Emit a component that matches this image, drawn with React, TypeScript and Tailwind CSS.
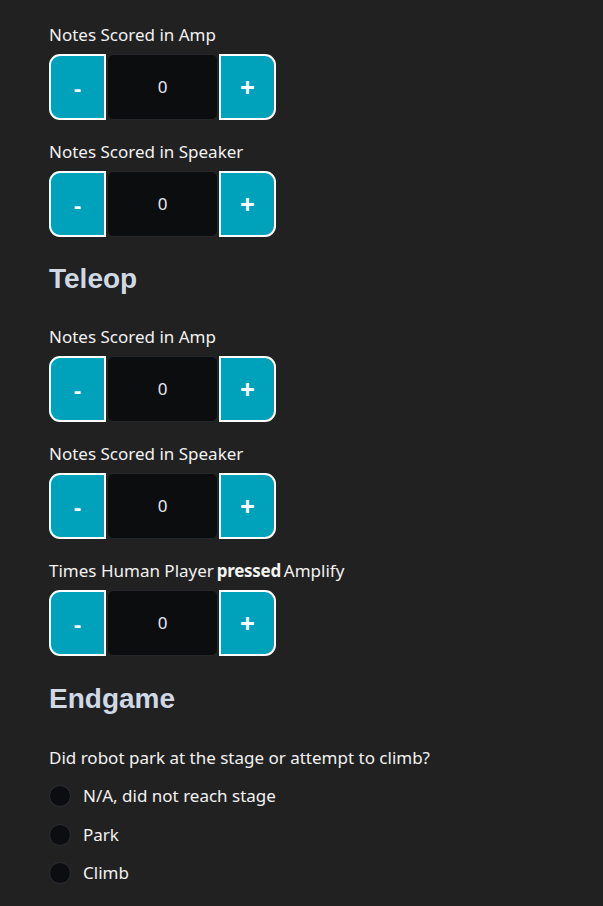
import React, { useState } from 'react';

const Counter: React.FC<{ label: React.ReactNode }> = ({ label }) => {
  const [value, setValue] = useState(0);
  return (
    <div>
      <p className="text-[17px] leading-6 text-[#f2f2f2] mb-[7px]">{label}</p>
      <div className="flex items-stretch h-[66px]">
        <button
          onClick={() => setValue(Math.max(0, value - 1))}
          className="w-[57px] bg-[#00a2bb] border-2 border-white rounded-l-[11px] text-white text-[22px] font-bold flex items-center justify-center"
        >
          -
        </button>
        <div className="w-[111px] mx-px bg-[#0c0d0f] border border-[#25272b] rounded-md flex items-center justify-center text-[17px] text-[#e4e9f0]">
          {value}
        </div>
        <button
          onClick={() => setValue(value + 1)}
          className="w-[57px] bg-[#00a2bb] border-2 border-white rounded-r-[11px] text-white text-[26px] font-bold flex items-center justify-center"
        >
          +
        </button>
      </div>
    </div>
  );
};

const Heading: React.FC<{ children: React.ReactNode }> = ({ children }) => (
  <h2 className="text-[28px] leading-8 font-bold text-[#cfd9e6] font-['Liberation_Sans',Arial,sans-serif]">
    {children}
  </h2>
);

export default function App() {
  const [climb, setClimb] = useState('');
  const options = ['N/A, did not reach stage', 'Park', 'Climb'];

  return (
    <div className="min-h-screen bg-[#212121] px-[49px] pt-[23px] pb-6 font-['Noto_Sans',sans-serif]">
      <div className="flex flex-col gap-5">
        <Counter label="Notes Scored in Amp" />
        <Counter label="Notes Scored in Speaker" />
      </div>

      <div className="mt-[26px] mb-[30px]">
        <Heading>Teleop</Heading>
      </div>

      <div className="flex flex-col gap-5">
        <Counter label="Notes Scored in Amp" />
        <Counter label="Notes Scored in Speaker" />
        <Counter
          label={
            <>
              Times Human Player<span className="font-bold tracking-[-0.3px] mx-[3px]">pressed</span>Amplify
            </>
          }
        />
      </div>

      <div className="mt-[27px] mb-[31px]">
        <Heading>Endgame</Heading>
      </div>

      <p className="text-[17px] leading-6 text-[#f2f2f2] mb-[14px]">
        Did robot park at the stage or attempt to climb?
      </p>
      <div className="flex flex-col gap-[14.5px]">
        {options.map((opt) => (
          <label key={opt} className="flex items-center h-6 cursor-pointer">
            <span
              onClick={() => setClimb(opt)}
              className={`w-[22px] h-[22px] rounded-full border border-[#2c2e33] ${climb === opt ? 'bg-[#00a2bb]' : 'bg-[#0c0d10]'}`}
            />
            <span className="ml-3 text-[17px] text-[#f2f2f2]">{opt}</span>
          </label>
        ))}
      </div>
    </div>
  );
}
